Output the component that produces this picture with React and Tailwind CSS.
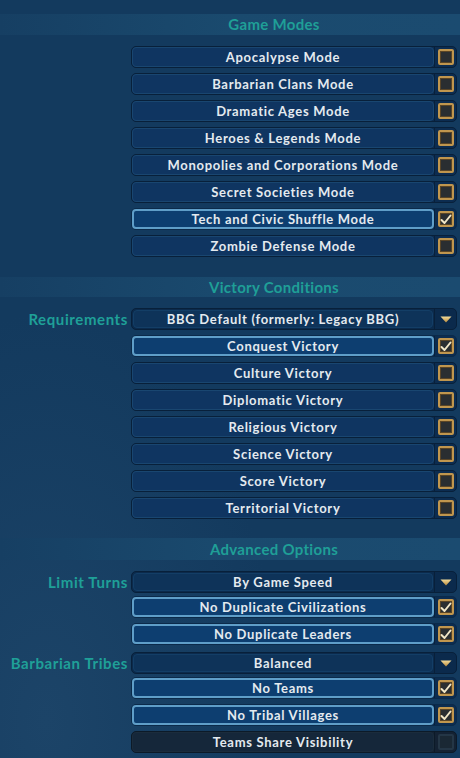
import React from "react";

const FONT = { fontFamily: "Lato, 'Open Sans', sans-serif" };

function Check({ on, disabled }) {
  if (disabled) {
    return (
      <div className="w-[16px] h-[16px] rounded-[2px] border-2 border-[#243646] bg-[#1a2834]" />
    );
  }
  return (
    <div className="w-[16px] h-[16px] rounded-[2px] border-2 border-[#c0964e] bg-[#2a2e31] shadow-[inset_0_0_0_1px_#5a4526] flex items-center justify-center">
      {on && (
        <svg width="12" height="11" viewBox="0 0 12 11">
          <path d="M1.5 6 L4.5 9 L10.5 1.5" fill="none" stroke="#f1e6c6" strokeWidth="2" strokeLinecap="round" strokeLinejoin="round" />
        </svg>
      )}
    </div>
  );
}

function Row({ text, on, disabled, extra = "" }) {
  const label = disabled
    ? "border border-[#1b2c3c] bg-[#15273a]"
    : on
    ? "border-2 border-[#5f9ec8] bg-[#0d3e70]"
    : "border border-[#194670] bg-[#0f3561]";
  return (
    <div
      className={
        "flex h-[22px] rounded-[5px] border " +
        (disabled ? "border-[#0c1a28] bg-[#142233]" : on ? "border-[#0b2a4a] bg-[#0c2c50]" : "border-[#08203a] bg-[#0c2c50]") +
        " " +
        extra
      }
    >
      <div className={"flex-1 rounded-[4px] flex items-center justify-center " + label}>
        <span className="text-[13px] font-bold tracking-[0.7px] text-[#e4eaef] leading-none">{text}</span>
      </div>
      <div className={"w-[22px] flex items-center justify-center border-l " + (disabled ? "border-[#0c1a28]" : "border-[#08203a]")}>
        <Check on={on} disabled={disabled} />
      </div>
    </div>
  );
}

function Dropdown({ text }) {
  return (
    <div className="flex h-[22px] rounded-[5px] border border-[#08203a] bg-[#0b2a4c]">
      <div className="flex-1 m-[1px] rounded-[4px] border border-[#133e66] bg-[#0e3359] flex items-center justify-center">
        <span className="text-[13px] font-bold tracking-[0.7px] text-[#e4eaef] leading-none">{text}</span>
      </div>
      <div className="w-[22px] flex items-center justify-center border-l border-[#08203a]">
        <svg width="12" height="7" viewBox="0 0 12 7">
          <defs>
            <linearGradient id="tri" x1="0" y1="0" x2="0" y2="1">
              <stop offset="0" stopColor="#f3dc9a" />
              <stop offset="1" stopColor="#b98a3c" />
            </linearGradient>
          </defs>
          <path d="M0.5 0.5 L11.5 0.5 L6 6.5 Z" fill="url(#tri)" />
        </svg>
      </div>
    </div>
  );
}

function Header({ text, h }) {
  return (
    <div
      className={"flex items-center justify-center pl-[88px] bg-gradient-to-r from-[#163f63] via-[#1a4a6e] to-[#1b4b70] " + h}
    >
      <span className="text-[15px] font-bold text-[#1f9f97] tracking-[0.3px]">{text}</span>
    </div>
  );
}

function Labeled({ label, children, extra = "" }) {
  return (
    <div className={"flex items-center " + extra}>
      <div className="w-[131px] pr-[3px] text-right text-[15px] font-bold text-[#1fa098] leading-none tracking-[0.6px]">
        {label}
      </div>
      <div className="flex-1">{children}</div>
    </div>
  );
}

export default function App() {
  const modes = [
    ["Apocalypse Mode", false],
    ["Barbarian Clans Mode", false],
    ["Dramatic Ages Mode", false],
    ["Heroes & Legends Mode", false],
    ["Monopolies and Corporations Mode", false],
    ["Secret Societies Mode", false],
    ["Tech and Civic Shuffle Mode", true],
    ["Zombie Defense Mode", false],
  ];
  const victories = [
    ["Conquest Victory", true],
    ["Culture Victory", false],
    ["Diplomatic Victory", false],
    ["Religious Victory", false],
    ["Science Victory", false],
    ["Score Victory", false],
    ["Territorial Victory", false],
  ];
  return (
    <div
      className="w-[460px] h-[758px] overflow-hidden bg-[#133a5e] bg-[radial-gradient(ellipse_at_10%_95%,#1c4468_0%,transparent_40%)] pt-[14px]"
      style={FONT}
    >
      <Header text="Game Modes" h="h-[21px]" />
      <div className="mt-[11px] pl-[131px] pr-[3px] flex flex-col gap-[5px]">
        {modes.map(([t, on]) => (
          <Row key={t} text={t} on={on} />
        ))}
      </div>

      <div className="mt-[20px]">
        <Header text="Victory Conditions" h="h-[20px]" />
      </div>
      <div className="mt-[11px] pr-[3px] flex flex-col">
        <Labeled label="Requirements">
          <Dropdown text="BBG Default (formerly: Legacy BBG)" />
        </Labeled>
        <div className="pl-[131px] mt-[5px] flex flex-col gap-[5px]">
          {victories.map(([t, on]) => (
            <Row key={t} text={t} on={on} />
          ))}
        </div>
      </div>

      <div className="mt-[19px]">
        <Header text="Advanced Options" h="h-[22px]" />
      </div>
      <div className="mt-[11px] pr-[3px] flex flex-col">
        <Labeled label="Limit Turns">
          <Dropdown text="By Game Speed" />
        </Labeled>
        <div className="pl-[131px] mt-[3px] flex flex-col gap-[5px]">
          <Row text="No Duplicate Civilizations" on />
          <Row text="No Duplicate Leaders" on />
        </div>
        <Labeled label="Barbarian Tribes" extra="mt-[7px]">
          <Dropdown text="Balanced" />
        </Labeled>
        <div className="pl-[131px] mt-[3px] flex flex-col gap-[5px]">
          <Row text="No Teams" on />
          <Row text="No Tribal Villages" on />
          <Row text="Teams Share Visibility" disabled />
        </div>
      </div>
    </div>
  );
}
